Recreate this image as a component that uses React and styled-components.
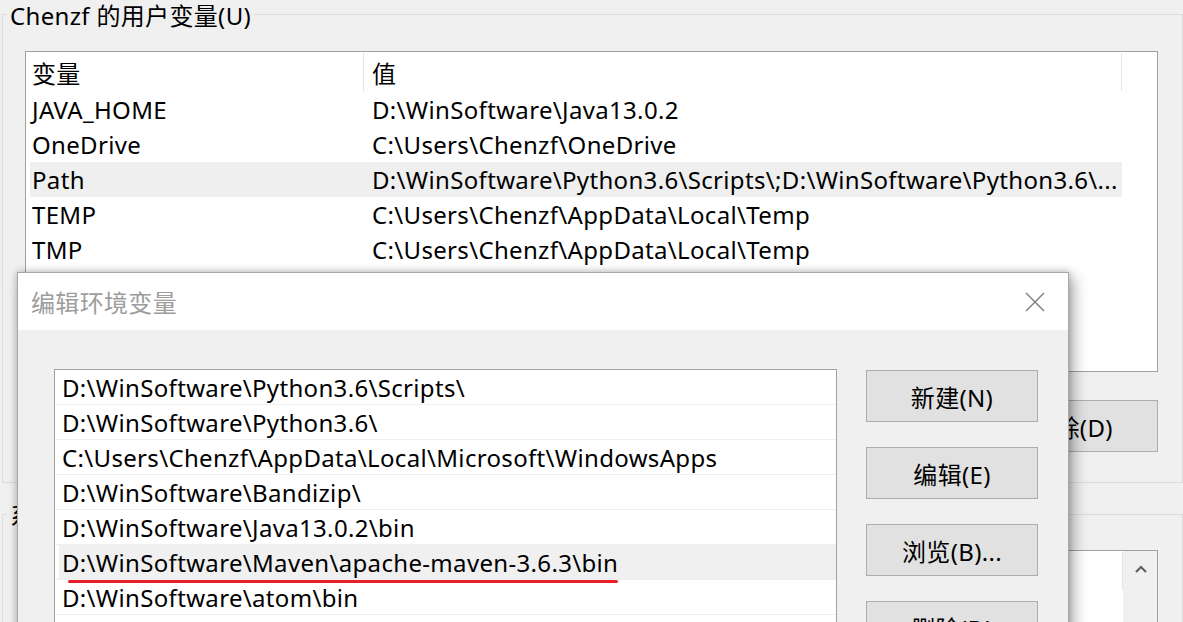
import React from "react";
import styled, { createGlobalStyle } from "styled-components";

const GlobalStyle = createGlobalStyle`
  *, *::before, *::after { box-sizing: border-box; }
  html, body { margin: 0; padding: 0; }
  body {
    font-family: "Noto Sans", "Noto Sans CJK SC", sans-serif;
    font-size: 24px;
    letter-spacing: 0.33px;
    color: #000;
    background: #f0f0f0;
    overflow: hidden;
  }
`;

const Screen = styled.div`
  position: relative;
  width: 1183px;
  height: 622px;
  overflow: hidden;
  background: #f0f0f0;
`;

const Window = styled.div`
  display: flex;
  flex-direction: column;
  padding-left: 2px;
`;

const Group = styled.fieldset`
  margin: ${(p) => (p.$first ? "-2px" : "15px")} 0 0 0;
  padding: 0;
  border: 1px solid #dcdcdc;
  min-width: 0;
`;

const GroupTitle = styled.legend`
  margin-left: 4px;
  padding: 4px 3px 0;
  line-height: 28px;
`;

const GroupBody = styled.div`
  padding: ${(p) => p.$top}px 24px 30px 22px;
`;

const ListBox = styled.div`
  display: flex;
  height: ${(p) => p.$height}px;
  border: 1px solid #a0a0a0;
  background: #fff;
  overflow: hidden;
`;

const Table = styled.div`
  flex: 1;
  min-width: 0;
`;

const HeaderRow = styled.div`
  display: grid;
  grid-template-columns: 338px ${(p) => p.$valueWidth};
  height: 40px;
`;

const HeaderCell = styled.div`
  display: flex;
  align-items: center;
  padding-left: ${(p) => p.$pad}px;
  border-right: 1px solid #e5e5e5;
  margin: 1px 0;
`;

const Row = styled.div`
  display: grid;
  grid-template-columns: 338px 758px;
  width: 1096px;
  height: 35px;
  align-items: center;
  background: ${(p) =>
    p.$selected ? "linear-gradient(90deg, #fff 4px, #efefef 4px)" : "#fff"};
`;

const Cell = styled.div`
  padding-left: ${(p) => p.$pad}px;
  white-space: nowrap;
  overflow: hidden;
  text-overflow: ellipsis;
`;

const ScrollBar = styled.div`
  width: 34px;
  border-left: 1px solid #f0f0f0;
  background: #f0f0f0;
  display: flex;
  justify-content: center;
  padding-top: 14px;
`;

const ButtonRow = styled.div`
  display: flex;
  justify-content: flex-end;
  gap: 14px;
  margin-top: 28px;
`;

const Button = styled.button`
  width: 172px;
  height: 52px;
  padding: 0;
  border: 1px solid #adadad;
  background: #e1e1e1;
  font: inherit;
  letter-spacing: inherit;
  color: #000;
`;

/* edit dialog, floating over the main window */
const Dialog = styled.div`
  position: absolute;
  left: 17px;
  top: 272px;
  width: 1052px;
  height: 480px;
  border: 1px solid #a8a8a8;
  background: #f0f0f0;
  box-shadow: 0 0 7px rgba(0, 0, 0, 0.22), 5px 5px 14px rgba(0, 0, 0, 0.3);
  display: flex;
  flex-direction: column;
`;

const TitleBar = styled.div`
  flex-shrink: 0;
  height: 57px;
  background: #fff;
  display: flex;
  align-items: center;
  justify-content: space-between;
  padding: 0 23px 0 13px;
  color: #9d9d9d;
`;

const DialogBody = styled.div`
  display: flex;
  gap: 29px;
  padding: 39px 29px 0 36px;
`;

const PathList = styled.div`
  width: 783px;
  height: 340px;
  border: 1px solid #a0a0a0;
  background: #fff;
`;

const PathRow = styled.div`
  height: 35px;
  display: flex;
  align-items: center;
  padding-left: 7px;
  border-bottom: 1px solid #efefef;
  white-space: nowrap;
  background: ${(p) =>
    p.$selected ? "linear-gradient(90deg, #fff 4px, #f0f0f0 4px)" : "#fff"};
`;

const PathText = styled.span`
  position: relative;

  &::after {
    content: "";
    display: ${(p) => (p.$marked ? "block" : "none")};
    position: absolute;
    left: 6px;
    right: 0;
    bottom: -4px;
    height: 3px;
    border-radius: 2px;
    background: #e8202a;
  }
`;

const ButtonColumn = styled.div`
  display: flex;
  flex-direction: column;
  gap: 25px;
  margin-top: 1px;
`;

const CloseIcon = () => (
  <svg width="20" height="20" viewBox="0 0 20 20">
    <path d="M1 1 L19 19 M19 1 L1 19" stroke="#7c7c7c" strokeWidth="1.4" fill="none" />
  </svg>
);

const ChevronUp = () => (
  <svg width="12" height="8" viewBox="0 0 12 8">
    <path d="M1 7 L6 2 L11 7" stroke="#606060" strokeWidth="2.2" fill="none" />
  </svg>
);

const userVars = [
  ["JAVA_HOME", "D:\\WinSoftware\\Java13.0.2"],
  ["OneDrive", "C:\\Users\\Chenzf\\OneDrive"],
  ["Path", "D:\\WinSoftware\\Python3.6\\Scripts\\;D:\\WinSoftware\\Python3.6\\..."],
  ["TEMP", "C:\\Users\\Chenzf\\AppData\\Local\\Temp"],
  ["TMP", "C:\\Users\\Chenzf\\AppData\\Local\\Temp"],
];

const paths = [
  "D:\\WinSoftware\\Python3.6\\Scripts\\",
  "D:\\WinSoftware\\Python3.6\\",
  "C:\\Users\\Chenzf\\AppData\\Local\\Microsoft\\WindowsApps",
  "D:\\WinSoftware\\Bandizip\\",
  "D:\\WinSoftware\\Java13.0.2\\bin",
  "D:\\WinSoftware\\Maven\\apache-maven-3.6.3\\bin",
  "D:\\WinSoftware\\atom\\bin",
];

export default function App() {
  return (
    <>
      <GlobalStyle />
      <Screen>
        <Window>
          <Group $first>
            <GroupTitle>Chenzf 的用户变量(U)</GroupTitle>
            <GroupBody $top={21}>
              <ListBox $height={321}>
                <Table>
                  <HeaderRow $valueWidth="758px">
                    <HeaderCell $pad={6}>变量</HeaderCell>
                    <HeaderCell $pad={8}>值</HeaderCell>
                  </HeaderRow>
                  {userVars.map(([name, value]) => (
                    <Row key={name} $selected={name === "Path"}>
                      <Cell $pad={6}>{name}</Cell>
                      <Cell $pad={8}>{value}</Cell>
                    </Row>
                  ))}
                </Table>
              </ListBox>
              <ButtonRow>
                <Button>新建(N)...</Button>
                <Button>编辑(E)...</Button>
                <Button>删除(D)</Button>
              </ButtonRow>
            </GroupBody>
          </Group>

          <Group>
            <GroupTitle>系统变量(S)</GroupTitle>
            <GroupBody $top={20}>
              <ListBox $height={200}>
                <Table>
                  <HeaderRow $valueWidth="1fr">
                    <HeaderCell $pad={6}>变量</HeaderCell>
                    <HeaderCell $pad={8}>值</HeaderCell>
                  </HeaderRow>
                </Table>
                <ScrollBar>
                  <ChevronUp />
                </ScrollBar>
              </ListBox>
            </GroupBody>
          </Group>
        </Window>

        <Dialog>
          <TitleBar>
            <span>编辑环境变量</span>
            <CloseIcon />
          </TitleBar>
          <DialogBody>
            <PathList>
              {paths.map((p, i) => (
                <PathRow key={p} $selected={i === 5}>
                  <PathText $marked={i === 5}>{p}</PathText>
                </PathRow>
              ))}
            </PathList>
            <ButtonColumn>
              <Button>新建(N)</Button>
              <Button>编辑(E)</Button>
              <Button>浏览(B)...</Button>
              <Button>删除(D)</Button>
            </ButtonColumn>
          </DialogBody>
        </Dialog>
      </Screen>
    </>
  );
}
